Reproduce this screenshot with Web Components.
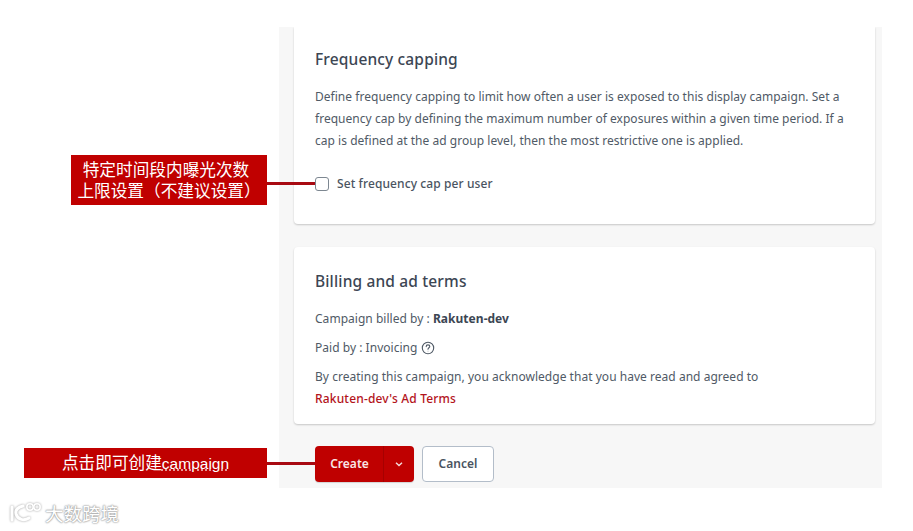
<!DOCTYPE html>
<html lang="en">
<head>
<meta charset="utf-8">
<title>Campaign settings</title>
<style>
  html, body { margin: 0; padding: 0; background: #fff; }
  body { width: 913px; height: 531px; overflow: hidden; position: relative; font-family: "Noto Sans", "Noto Sans CJK SC", sans-serif; }
</style>
</head>
<body>
<settings-panel>
  <settings-card heading="Frequency capping" style="--card-height: 197px; --card-top: 21px; --title-gap: 16px">
    <p-text>Define frequency capping to limit how often a user is exposed to this display campaign. Set a<br>frequency cap by defining the maximum number of exposures within a given time period. If a<br>cap is defined at the ad group level, then the most restrictive one is applied.</p-text>
    <check-row>Set frequency cap per user</check-row>
  </settings-card>
  <settings-card heading="Billing and ad terms" style="--card-height: 177px; --card-top: 23px; --title-gap: 18px; margin-top: 1px">
    <billing-terms></billing-terms>
  </settings-card>
  <action-bar></action-bar>
</settings-panel>

<call-out style="--x:71px; --y:155px; --w:196px; --h:50px; --line-y:27px; --line-w:48px"><span style="margin-right:6px">特定时间段内曝光次数</span><br>上限设置（不建议设置）</call-out>
<call-out style="--x:24px; --y:448px; --w:243px; --h:30px; --line-y:14px; --line-w:48px">点击即可创建<u>campaign</u></call-out>
<water-mark></water-mark>

<script>
class SettingsPanel extends HTMLElement {
  constructor() {
    super();
    this.attachShadow({ mode: 'open' });
    this.shadowRoot.innerHTML = `
      <style>
        :host { display: flex; flex-direction: column; gap: 22px; box-sizing: border-box; width: 603px; height: 461px; margin: 27px 0 0 279px; padding: 0 7px 0 15px; background: #f7f7f7; overflow: hidden; }
      </style>
      <slot></slot>
    `;
  }
}
customElements.define('settings-panel', SettingsPanel);

class SettingsCard extends HTMLElement {
  constructor() {
    super();
    this.attachShadow({ mode: 'open' });
    const heading = this.getAttribute('heading') || '';
    this.shadowRoot.innerHTML = `
      <style>
        :host { display: block; box-sizing: border-box; height: var(--card-height); padding: var(--card-top) 22px 0 21px; background: #fff; border-radius: 0 0 4px 4px; box-shadow: 0 1px 2px rgba(0,0,0,0.2); }
        :host(:not(:first-child)) { border-radius: 4px; }
        h2 { margin: 0 0 var(--title-gap); font: 500 15.5px/22px "Noto Sans", sans-serif; letter-spacing: 0.15px; color: #3c4653; }
      </style>
      <h2>${heading}</h2>
      <slot></slot>
    `;
  }
}
customElements.define('settings-card', SettingsCard);

class PText extends HTMLElement {
  constructor() {
    super();
    this.attachShadow({ mode: 'open' });
    this.shadowRoot.innerHTML = `
      <style>
        :host { display: block; font: 400 12px/22px "Noto Sans", sans-serif; letter-spacing: 0.03px; color: #505a66; white-space: nowrap; }
      </style>
      <slot></slot>
    `;
  }
}
customElements.define('p-text', PText);

class CheckRow extends HTMLElement {
  constructor() {
    super();
    this.attachShadow({ mode: 'open' });
    this.shadowRoot.innerHTML = `
      <style>
        :host { display: flex; align-items: center; gap: 8px; margin-top: 24px; font: 500 12px/16px "Noto Sans", sans-serif; letter-spacing: 0.1px; color: #4a5461; }
        i { box-sizing: border-box; width: 14px; height: 14px; background: #fff; border: 1.5px solid #7d8791; border-radius: 3px; }
      </style>
      <i></i><slot></slot>
    `;
  }
}
customElements.define('check-row', CheckRow);

class BillingTerms extends HTMLElement {
  constructor() {
    super();
    this.attachShadow({ mode: 'open' });
    this.shadowRoot.innerHTML = `
      <style>
        :host { display: flex; flex-direction: column; font: 400 12px/22px "Noto Sans", sans-serif; letter-spacing: 0.03px; color: #505a66; white-space: nowrap; }
        div { display: flex; align-items: center; gap: 4px; }
        .by { margin-top: -2px; }
        .paid { margin-top: 7px; }
        .agree { margin-top: 7px; }
        b { font-weight: 700; color: #3c4653; }
        a { color: #b3131b; font-weight: 500; letter-spacing: 0.17px; text-decoration: none; }
        svg { display: block; width: 14px; height: 14px; }
      </style>
      <div class="by"><span>Campaign billed by : <b>Rakuten-dev</b></span></div>
      <div class="paid"><span>Paid by : Invoicing</span>
        <svg viewBox="0 0 14 14" fill="none" stroke="#505a66" stroke-width="1.1">
          <circle cx="7" cy="7" r="5.7"/>
          <path d="M5.2 5.6c0-1 .8-1.7 1.8-1.7s1.8.7 1.8 1.6c0 1.2-1.8 1.4-1.8 2.8" stroke-linecap="round"/>
          <circle cx="7" cy="10.1" r=".45" fill="#505a66" stroke="none"/>
        </svg>
      </div>
      <div class="agree"><span>By creating this campaign, you acknowledge that you have read and agreed to</span></div>
      <div><a href="#">Rakuten-dev's Ad Terms</a></div>
    `;
  }
}
customElements.define('billing-terms', BillingTerms);

class ActionBar extends HTMLElement {
  constructor() {
    super();
    this.attachShadow({ mode: 'open' });
    this.shadowRoot.innerHTML = `
      <style>
        :host { display: flex; gap: 8px; margin: 0 0 0 21px; font: 600 12px/1 "Noto Sans", sans-serif; }
        .split { display: flex; height: 36px; background: #bf0000; border-radius: 4px; color: #f9e6e6; box-shadow: 0 1px 1px rgba(0,0,0,0.15); }
        .main { display: flex; align-items: center; justify-content: center; width: 69px; border-right: 1px solid #a60000; padding-left: 1px; box-sizing: border-box; }
        .more { display: flex; align-items: center; justify-content: center; width: 30px; }
        svg { width: 10px; height: 10px; }
        .cancel { display: flex; align-items: center; justify-content: center; box-sizing: border-box; width: 72px; height: 36px; background: #fff; border: 1px solid #b3bdc9; border-radius: 4px; color: #4a5461; }
      </style>
      <div class="split">
        <div class="main">Create</div>
        <div class="more">
          <svg viewBox="0 0 10 10" fill="none" stroke="#f4dcdc" stroke-width="1.4"><path d="M2 3.8 5 6.6 8 3.8"/></svg>
        </div>
      </div>
      <div class="cancel">Cancel</div>
    `;
  }
}
customElements.define('action-bar', ActionBar);

// annotations sit on top of the screenshot, so these are placed by coordinates
class CallOut extends HTMLElement {
  constructor() {
    super();
    this.attachShadow({ mode: 'open' });
    this.shadowRoot.innerHTML = `
      <style>
        :host { position: absolute; left: var(--x); top: var(--y); display: flex; align-items: center; justify-content: center; box-sizing: border-box; width: var(--w); height: var(--h); padding-top: 1px; background: #c00000; color: #fff; font: 400 16.67px/21px "Liberation Sans", "Noto Sans CJK SC", sans-serif; text-align: center; white-space: nowrap; }
        .line { position: absolute; left: 100%; top: var(--line-y); width: var(--line-w); height: 2.6px; background: #a80a12; }
        ::slotted(u) { font-size: 15.5px; text-decoration: underline dotted #f2c4c4; }
      </style>
      <div><slot></slot></div>
      <span class="line"></span>
    `;
  }
}
customElements.define('call-out', CallOut);

class WaterMark extends HTMLElement {
  constructor() {
    super();
    this.attachShadow({ mode: 'open' });
    this.shadowRoot.innerHTML = `
      <style>
        :host { position: absolute; left: 8px; top: 501px; display: flex; align-items: center; gap: 4px; color: #fff; font: 400 18.5px/24px "Noto Sans CJK SC", sans-serif; text-shadow: 0 0 2px #a0a0a0, 0 0 2px #a0a0a0, 0 0 1px #a0a0a0; }
        svg { display: block; width: 33px; height: 24px; filter: drop-shadow(0 0 1px #a0a0a0); }
      </style>
      <svg viewBox="0 0 33 24" fill="none" stroke="#fff" stroke-width="3">
        <path d="M4 6v13M15 5c-5 1-8 4-7 8 2 6 8 7 13 4" stroke-linecap="round"/>
        <circle cx="22" cy="6" r="3.2" stroke-width="1.6"/>
        <circle cx="29" cy="6" r="3.2" stroke-width="1.6"/>
      </svg>
      <span>大数跨境</span>
    `;
  }
}
customElements.define('water-mark', WaterMark);
</script>
</body>
</html>
